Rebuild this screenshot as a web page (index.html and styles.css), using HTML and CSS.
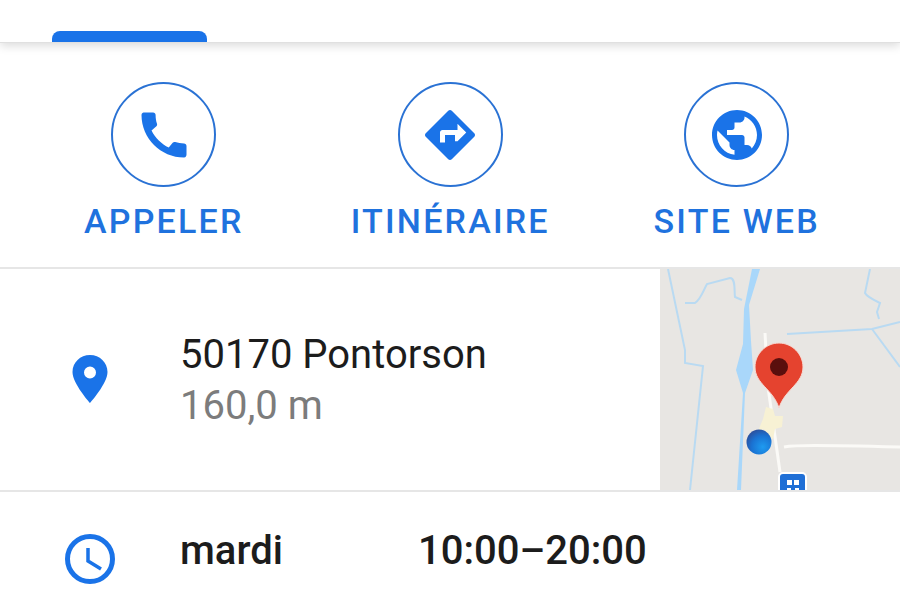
FILE: index.html
```html
<!DOCTYPE html>
<html lang="fr">
<head>
    <meta charset="UTF-8">
    <meta name="viewport" content="width=device-width, initial-scale=1.0">
    <title>Pontorson</title>
    <link rel="stylesheet" href="styles.css">
</head>
<body>
    <!-- Tab bar -->
    <div class="tab-bar">
        <div class="tab-indicator"></div>
    </div>

    <!-- Action buttons -->
    <div class="actions">
        <div class="action">
            <div class="action-circle">
                <svg class="action-icon" viewBox="0 0 24 24"><path d="M20.010 15.380c-1.230 0-2.420-.2-3.530-.56-.35-.12-.74-.03-1.010.24l-1.570 1.970c-2.830-1.350-5.480-3.900-6.890-6.830l1.950-1.660c.27-.28.35-.67.24-1.020-.37-1.110-.56-2.300-.56-3.530 0-.54-.45-.99-.99-.99H4.190C3.650 3 3 3.240 3 3.990 3 13.280 10.730 21 20.010 21c.71 0 .99-.63.99-1.180v-3.450c0-.54-.45-.99-.99-.99z"/></svg>
            </div>
            <div class="action-label">APPELER</div>
        </div>
        <div class="action">
            <div class="action-circle">
                <svg class="action-icon" viewBox="0 0 24 24"><path d="M21.710 11.290l-9-9c-.39-.39-1.020-.39-1.410 0l-9 9c-.39.39-.39 1.020 0 1.410l9 9c.39.39 1.020.39 1.410 0l9-9c.39-.38.39-1.010 0-1.410zM14 14.500V12h-4v3H8v-4c0-.55.45-1 1-1h6V7.500l3.500 3.500-3.500 3.500z"/></svg>
            </div>
            <div class="action-label">ITINÉRAIRE</div>
        </div>
        <div class="action">
            <div class="action-circle">
                <svg class="action-icon" viewBox="0 0 24 24"><path d="M12 2C6.480 2 2 6.480 2 12s4.480 10 10 10 10-4.480 10-10S17.520 2 12 2zm-1 17.930c-3.950-.49-7-3.850-7-7.930 0-.62.08-1.210.21-1.790L9 15v1c0 1.100.9 2 2 2v1.930zm6.900-2.540c-.26-.81-1-1.390-1.900-1.390h-1v-3c0-.55-.45-1-1-1H8v-2h2c.55 0 1-.45 1-1V7h2c1.100 0 2-.9 2-2v-.41c2.930 1.190 5 4.060 5 7.410 0 2.080-.8 3.970-2.100 5.390z"/></svg>
            </div>
            <div class="action-label">SITE WEB</div>
        </div>
    </div>

    <!-- Address row -->
    <div class="address-row">
        <div class="row-icon">
            <svg class="pin-icon" viewBox="0 0 36 50"><path fill-rule="evenodd" d="M18 1C8.300 1 .5 8.500.5 18c0 11.500 17.500 31 17.500 31s17.500-19.500 17.500-31C35.500 8.500 27.700 1 18 1zm0 11.500a6 6 0 1 1 0 12 6 6 0 0 1 0-12z"/></svg>
        </div>
        <div class="address-text">
            <div class="address-name">50170 Pontorson</div>
            <div class="address-distance">160,0 m</div>
        </div>
        <div class="map">
            <svg viewBox="0 0 240 221" width="240" height="221">
                <defs>
                    <radialGradient id="ball" cx="0.65" cy="0.7" r="0.75">
                        <stop offset="0" stop-color="#1e9bf0"/>
                        <stop offset="0.6" stop-color="#1a72d2"/>
                        <stop offset="1" stop-color="#2c4f9c"/>
                    </radialGradient>
                </defs>
                <rect width="240" height="221" fill="#e8e6e3"/>
                <g fill="none" stroke="#b9daf2" stroke-width="2">
                    <path d="M8 0 L25 81 L25 94 L43 97 L30 221"/>
                    <path d="M25 34 L35 34 C41 30 43 22 47 15 L70 9 C76 9 74 22 75 28 L82 31"/>
                    <path d="M210 0 L205 24 C207 28 216 32 220 34 L217 43 L219 50"/>
                    <path d="M127 65 L212 60 L240 53"/>
                    <path d="M212 60 L240 98"/>
                </g>
                <path d="M92 0 L100 0 L89 36 L91 72 L93 101 L85 124 L81 221 L77 221 L83 124 L76 101 L83 75 L84 40 Z" fill="#a9d7fa"/>
                <g fill="none" stroke="#fbfaf7" stroke-width="3">
                    <path d="M105 64 L108 118 L120 203"/>
                    <path d="M124 178 C135 176 157 176 240 178"/>
                </g>
                <path d="M106 138 L113 140 L115 147 L123 147 L122 158 L115 160 L113 170 L107 166 L104 160 L98 162 L103 150 Z" fill="#f7f1d4"/>
                <circle cx="99" cy="173" r="12.500" fill="url(#ball)"/>
                <rect x="119" y="204" width="27" height="24" rx="4" fill="#1f6fd6" stroke="#fff" stroke-width="2"/>
                <rect x="127" y="211" width="5" height="5" fill="#fff"/>
                <rect x="134" y="211" width="5" height="5" fill="#fff"/>
                <rect x="127" y="219" width="4" height="2" fill="#fff"/>
                <rect x="135" y="219" width="4" height="2" fill="#fff"/>
                <path d="M119 74 C132 74 143 85 143 98 C143 115 125 120 119 139 C113 120 95 115 95 98 C95 85 106 74 119 74 Z" fill="#e5432f" stroke="#f7d9d2" stroke-width="1"/>
                <circle cx="119" cy="98" r="9" fill="#5a0f0d"/>
            </svg>
        </div>
    </div>

    <!-- Hours row -->
    <div class="hours-row">
        <div class="row-icon">
            <svg class="clock-icon" viewBox="0 0 50 50"><circle cx="25" cy="25" r="22.500" fill="none" stroke-width="5"/><path d="M23 14v13l13 8" fill="none" stroke-width="3.500"/></svg>
        </div>
        <div class="hours-day">mardi</div>
        <div class="hours-time">10:00–20:00</div>
    </div>
</body>
</html>
```

FILE: styles.css
```css
/* Global Styles */
body {
    margin: 0;
    height: 600px;
    overflow: hidden;
    background: #fff;
    font-family: 'Roboto', sans-serif;
    color: #1c1c1c;
}

/* Tab bar */
.tab-bar {
    height: 42px;
    display: flex;
    align-items: flex-end;
    padding-left: 52px;
    box-sizing: border-box;
    box-shadow: 0 1px 0 #e0e0e0, 0 4px 9px rgba(0, 0, 0, 0.14);
}

.tab-indicator {
    width: 155px;
    height: 11px;
    background: #1a73e8;
    border-radius: 8px 8px 0 0;
}

/* Action buttons */
.actions {
    height: 225px;
    display: grid;
    grid-template-columns: repeat(3, 286.5px);
    padding: 40px 0 0 20.5px;
    box-sizing: border-box;
}

.action {
    display: flex;
    flex-direction: column;
    align-items: center;
}

.action-circle {
    width: 105px;
    height: 105px;
    border: 2px solid #2a72d4;
    border-radius: 50%;
    box-sizing: border-box;
    display: flex;
    align-items: center;
    justify-content: center;
}

.action-icon {
    width: 60px;
    height: 60px;
    fill: #1a73e8;
}

.action-label {
    margin-top: 15px;
    font-size: 34px;
    line-height: 38px;
    font-weight: 500;
    letter-spacing: 2.2px;
    white-space: nowrap;
    color: #1f72de;
}

/* Address row */
.address-row {
    height: 225px;
    display: flex;
    box-sizing: border-box;
    border-top: 2px solid #e6e6e6;
    border-bottom: 2px solid #e6e6e6;
}

.row-icon {
    width: 180px;
    flex-shrink: 0;
    padding-left: 65px;
    box-sizing: border-box;
}

.pin-icon {
    display: block;
    width: 36px;
    height: 50px;
    margin: 85px 0 0 7px;
    fill: #1a73e8;
}

.address-text {
    flex: 1;
    padding-top: 62px;
}

.address-name {
    font-size: 40px;
    line-height: 48px;
}

.address-distance {
    font-size: 40px;
    line-height: 53px;
    color: #7c7c7c;
}

.map {
    width: 240px;
    height: 221px;
}

.map svg {
    display: block;
}

/* Hours row */
.hours-row {
    display: flex;
    padding-top: 36px;
    font-size: 40px;
    line-height: 46px;
    font-weight: 500;
}

.clock-icon {
    display: block;
    width: 50px;
    height: 50px;
    margin-top: 6px;
    stroke: #1a73e8;
}

.hours-day {
    width: 238px;
}
```
